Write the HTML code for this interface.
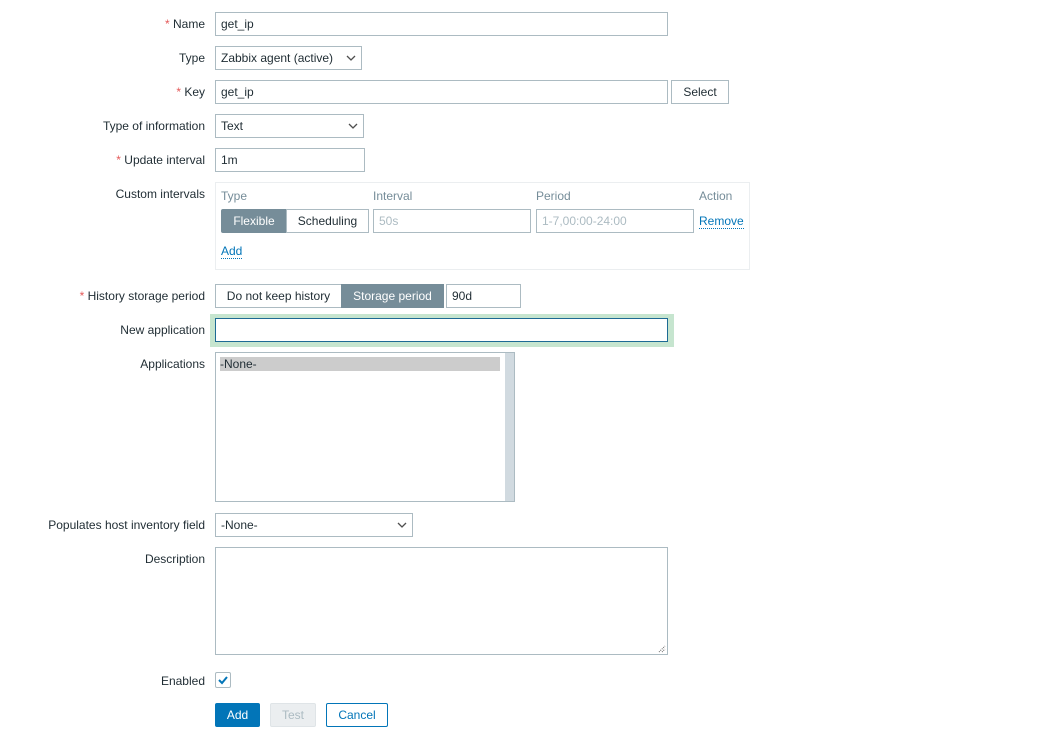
<!DOCTYPE html>
<html><head><style>
body{margin:0;width:1051px;height:742px;background:#fff;font-family:"Liberation Sans",Arial,sans-serif;font-size:12px;color:#1f2c33;position:relative;overflow:hidden}
.a{position:absolute;box-sizing:border-box}
.l{position:absolute;right:846px;text-align:right;white-space:nowrap;line-height:14px;margin-top:1px}
.r{color:#e45959}
.in{position:absolute;box-sizing:border-box;border:1px solid #acbbc2;background:#fff;padding-left:5px;line-height:22px;height:24px;white-space:nowrap}
.ch{position:absolute;width:10px;height:10px;top:6px}
.lnk{color:#0275b8;border-bottom:1px dotted #0275b8;line-height:13px}
</style></head><body>
<div class="l" style="top:16px"><span class="r">*</span> Name</div>
<div class="in" style="left:215px;top:12px;width:453px">get_ip</div>
<div class="l" style="top:50px">Type</div>
<div class="in" style="left:215px;top:46px;width:147px">Zabbix agent (active)<svg class="ch" style="right:5px" viewBox="0 0 10 10"><path d="M1 3l4 4 4-4" stroke="#4f4f4f" fill="none" stroke-width="1.3"/></svg></div>
<div class="l" style="top:84px"><span class="r">*</span> Key</div>
<div class="in" style="left:215px;top:80px;width:453px">get_ip</div>
<div class="in" style="left:671px;top:80px;width:58px;padding:0;text-align:center">Select</div>
<div class="l" style="top:118px">Type of information</div>
<div class="in" style="left:215px;top:114px;width:149px">Text<svg class="ch" style="right:5px" viewBox="0 0 10 10"><path d="M1 3l4 4 4-4" stroke="#4f4f4f" fill="none" stroke-width="1.3"/></svg></div>
<div class="l" style="top:152px"><span class="r">*</span> Update interval</div>
<div class="in" style="left:215px;top:148px;width:150px">1m</div>
<div class="l" style="top:186px">Custom intervals</div>
<div class="a" style="left:215px;top:182px;width:535px;height:88px;border:1px solid #ebeef0"></div>
<div class="a" style="left:221px;top:189px;color:#768d99">Type</div>
<div class="a" style="left:373px;top:189px;color:#768d99">Interval</div>
<div class="a" style="left:536px;top:189px;color:#768d99">Period</div>
<div class="a" style="left:699px;top:189px;color:#768d99">Action</div>
<div class="a" style="left:221px;top:209px;width:66px;height:24px;background:#768d99;color:#fff;text-align:center;line-height:24px;border-radius:2px 0 0 2px">Flexible</div>
<div class="in" style="left:286px;top:209px;width:83px;padding:0;text-align:center">Scheduling</div>
<div class="in" style="left:373px;top:209px;width:158px;color:#acbbc2">50s</div>
<div class="in" style="left:536px;top:209px;width:158px;color:#acbbc2">1-7,00:00-24:00</div>
<div class="a" style="left:699px;top:214px"><span class="lnk">Remove</span></div>
<div class="a" style="left:221px;top:244px"><span class="lnk">Add</span></div>
<div class="l" style="top:288px"><span class="r">*</span> History storage period</div>
<div class="in" style="left:215px;top:284px;width:127px;padding:0;text-align:center">Do not keep history</div>
<div class="a" style="left:341px;top:284px;width:103px;height:24px;background:#768d99;color:#fff;text-align:center;line-height:24px">Storage period</div>
<div class="in" style="left:446px;top:284px;width:75px">90d</div>
<div class="l" style="top:322px">New application</div>
<div class="a" style="left:210px;top:314px;width:464px;height:33px;background:#c6e5cf"></div>
<div class="a" style="left:215px;top:318px;width:453px;height:24px;border:1px solid #1d6a94;background:#fff"></div>
<div class="l" style="top:356px">Applications</div>
<div class="a" style="left:215px;top:352px;width:300px;height:150px;border:1px solid #acbbc2;background:#fff"></div>
<div class="a" style="left:505px;top:353px;width:9px;height:148px;background:#d1dae0"></div>
<div class="a" style="left:220px;top:357px;width:280px;height:14px;background:#cccccc;line-height:14px">-None-</div>
<div class="l" style="top:517px">Populates host inventory field</div>
<div class="in" style="left:215px;top:513px;width:198px">-None-<svg class="ch" style="right:5px" viewBox="0 0 10 10"><path d="M1 3l4 4 4-4" stroke="#4f4f4f" fill="none" stroke-width="1.3"/></svg></div>
<div class="l" style="top:551px">Description</div>
<div class="a" style="left:215px;top:547px;width:453px;height:108px;border:1px solid #acbbc2"><svg style="position:absolute;right:1px;bottom:1px" width="8" height="8"><path d="M1 7L7 1M4 7L7 4" stroke="#666" stroke-width="1" stroke-dasharray="1 1"/></svg></div>
<div class="l" style="top:673px">Enabled</div>
<div class="a" style="left:215px;top:672px;width:16px;height:16px;border:1px solid #acbbc2;border-radius:2px"><svg width="14" height="14" style="position:absolute;left:0;top:0"><path d="M3 7l3 3 5-6" stroke="#0275b8" stroke-width="2" fill="none"/></svg></div>
<div class="a" style="left:215px;top:703px;width:45px;height:24px;background:#0275b8;color:#fff;text-align:center;line-height:24px;border-radius:2px">Add</div>
<div class="a" style="left:270px;top:703px;width:46px;height:24px;background:#ebeef0;border:1px solid #dfe4e7;color:#acbbc2;text-align:center;line-height:22px;border-radius:2px">Test</div>
<div class="a" style="left:326px;top:703px;width:62px;height:24px;border:1px solid #0275b8;color:#0275b8;text-align:center;line-height:22px;border-radius:2px">Cancel</div>
</body></html>
